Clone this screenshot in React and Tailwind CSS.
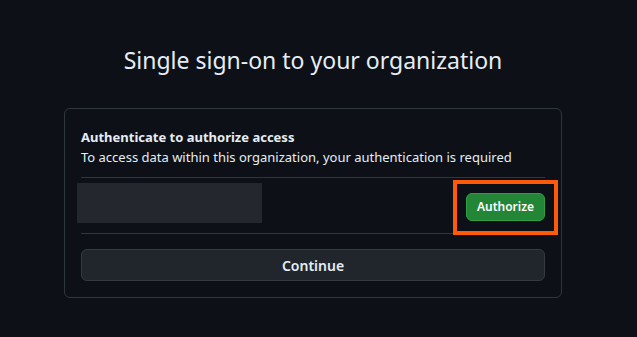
import React from 'react';

const App = () => {
    return (
        <div
            className="w-[637px] h-[337px] bg-[#0d1117] text-[#e6edf3] overflow-hidden"
            style={{ fontFamily: '"Noto Sans", "Open Sans", sans-serif' }}
        >
            <div className="flex flex-col items-center pt-[42px] pr-[11px]">
                <h1 className="text-[23px] leading-[36px] font-normal">Single sign-on to your organization</h1>

                <div className="mt-[30px] w-[498px] border border-[#30363d] rounded-md px-4 pt-[18px] pb-4">
                    <p className="text-[13px] leading-[20px] font-bold">Authenticate to authorize access</p>
                    <p className="text-[13px] leading-[21px]">To access data within this organization, your authentication is required</p>

                    <div className="mt-[9px] border-t border-[#30363d]" />

                    {/* Org row */}
                    <div className="relative flex items-start justify-between h-[55px]">
                        <div className="mt-[5px] ml-[-4px] w-[185px] h-[40px] bg-[#24272e]" />
                        <button className="mt-[15px] w-[79px] h-[28px] bg-[#238636] border border-[#2ea043] rounded-md text-white text-[12px] font-semibold">
                            Authorize
                        </button>
                        {/* highlight */}
                        <div className="absolute right-[-13px] top-[2px] w-[105px] h-[55px] border-[4px] border-[#ff5a0a]" />
                    </div>

                    <div className="border-t border-[#30363d]" />

                    <button className="mt-[15px] w-full h-[32px] bg-[#21262d] border border-[#363b42] rounded-md text-[14px] font-semibold">
                        Continue
                    </button>
                </div>
            </div>
        </div>
    );
};

export default App;
